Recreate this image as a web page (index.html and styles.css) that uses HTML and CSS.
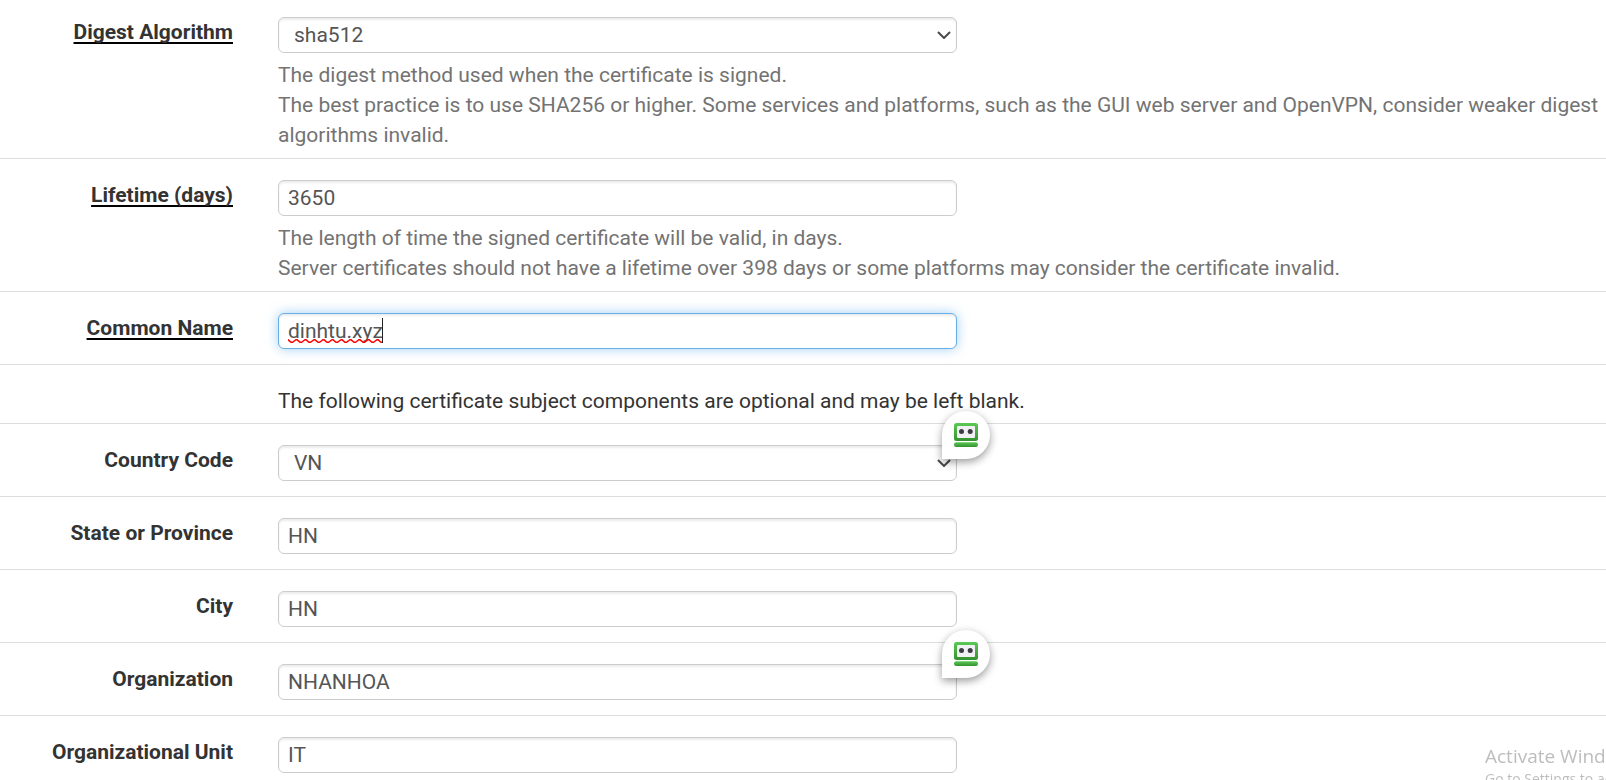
FILE: index.html
```
<!DOCTYPE html>
<html lang="en">
<head>
<meta charset="utf-8">
<title>Certificate</title>
<link rel="stylesheet" href="styles.css">
</head>
<body>
<svg class="defs" aria-hidden="true">
  <defs>
    <linearGradient id="green" x1="0" y1="0" x2="0" y2="1">
      <stop offset="0" stop-color="#5bc955"/>
      <stop offset="1" stop-color="#35922f"/>
    </linearGradient>
    <symbol id="robot" viewBox="0 0 24 24">
      <rect width="24" height="18" rx="2.5" fill="url(#green)"/>
      <rect x="3" y="3" width="18" height="12" rx="1" fill="#f1f1f3"/>
      <circle cx="7.5" cy="8.5" r="2.5" fill="#3c3c46"/>
      <circle cx="16.2" cy="8.5" r="2.5" fill="#3c3c46"/>
      <rect y="19.2" width="24" height="4.8" rx="2.2" fill="url(#green)"/>
    </symbol>
    <symbol id="chevron" viewBox="0 0 14 8">
      <path d="M1 1l6 6 6-6" fill="none" stroke="#4a4a4a" stroke-width="2"/>
    </symbol>
    <pattern id="zigzag" y="21" width="9" height="4" patternUnits="userSpaceOnUse">
      <path d="M-1.5 0L0 .7L3 3.3H4.5L8 .7L9 .7L10.5 2" fill="none" stroke="#f00" stroke-width="1.4"/>
    </pattern>
  </defs>
</svg>
<form class="form">
  <div class="row">
    <label class="label" for="digest"><span class="required">Digest Algorithm</span></label>
    <div class="control">
      <select class="field field-select" id="digest"><option>sha512</option></select>
      <svg class="chevron" aria-hidden="true"><use href="#chevron"/></svg>
    </div>
    <p class="help">The digest method used when the certificate is signed.<br>The best practice is to use SHA256 or higher. Some services and platforms, such as the GUI web server and OpenVPN, consider weaker digest algorithms invalid.</p>
  </div>
  <div class="row">
    <label class="label" for="lifetime"><span class="required">Lifetime (days)</span></label>
    <div class="control"><input class="field" id="lifetime" type="text" value="3650"></div>
    <p class="help">The length of time the signed certificate will be valid, in days.<br>Server certificates should not have a lifetime over 398 days or some platforms may consider the certificate invalid.</p>
  </div>
  <div class="row">
    <label class="label" for="cn"><span class="required">Common Name</span></label>
    <div class="control">
      <input class="field field-active" id="cn" type="text" value="dinhtu.xyz" spellcheck="false">
      <svg class="typing" aria-hidden="true"><rect y="21" width="94" height="4" fill="url(#zigzag)"/><rect x="94" width="1" height="25" fill="#222"/></svg>
    </div>
  </div>
  <div class="row row-note">
    <p class="note">The following certificate subject components are optional and may be left blank.</p>
  </div>
  <div class="row">
    <label class="label" for="country">Country Code</label>
    <div class="control">
      <select class="field field-select" id="country"><option>VN</option></select>
      <svg class="chevron" aria-hidden="true"><use href="#chevron"/></svg>
      <button class="badge" type="button" aria-label="Fill country"><svg class="badge-icon"><use href="#robot"/></svg></button>
    </div>
  </div>
  <div class="row">
    <label class="label" for="state">State or Province</label>
    <div class="control"><input class="field" id="state" type="text" value="HN"></div>
  </div>
  <div class="row">
    <label class="label" for="city">City</label>
    <div class="control"><input class="field" id="city" type="text" value="HN"></div>
  </div>
  <div class="row">
    <label class="label" for="org">Organization</label>
    <div class="control">
      <input class="field" id="org" type="text" value="NHANHOA">
      <button class="badge" type="button" aria-label="Fill organization"><svg class="badge-icon"><use href="#robot"/></svg></button>
    </div>
  </div>
  <div class="row row-last">
    <label class="label" for="unit">Organizational Unit</label>
    <div class="control"><input class="field" id="unit" type="text" value="IT"></div>
  </div>
</form>
<div class="watermark">
  <div class="watermark-title">Activate Windows</div>
  <div class="watermark-text">Go to Settings to activate Windows.</div>
</div>
</body>
</html>
```
FILE: styles.css
```
* { box-sizing: border-box; }

body {
  margin: 0;
  background: #fff;
  color: #333;
  font: 21px/30px Roboto, "Liberation Sans", sans-serif;
}

p { margin: 0; }

.defs { position: absolute; width: 0; height: 0; }

.row {
  display: grid;
  grid-template-columns: 233fr 679fr 600fr;
  column-gap: 45px;
  padding: 21px 4px 15px 0;
  border-bottom: 1px solid #ddd;
}
.row:first-child { padding-top: 17px; }
.row:has(.help) { padding-bottom: 8px; }
.row-note { padding-bottom: 7px; }
.row-last { padding-bottom: 0; border-bottom: 0; }

.label { text-align: right; font-weight: 700; }

.required {
  text-decoration: underline #000 2px;
  text-underline-offset: 3px;
  text-decoration-skip-ink: none;
}

.control { position: relative; grid-column: 2; height: 36px; }

.field {
  display: block;
  width: 100%;
  height: 36px;
  margin: 0;
  padding: 0 9px;
  border: 1px solid #ccc;
  border-radius: 6px;
  outline: 0;
  background: #fff;
  box-shadow: inset 0 2px 2px rgba(0, 0, 0, .075);
  color: #555;
  font: inherit;
}

.field-select { appearance: none; padding: 0 15px; }

.field-active {
  border-color: #66afe9;
  box-shadow: inset 0 2px 2px rgba(0, 0, 0, .075), 0 0 12px rgba(102, 175, 233, .6);
}

.chevron {
  position: absolute;
  top: 14px;
  right: 6px;
  width: 14px;
  height: 8px;
  pointer-events: none;
}

.typing {
  position: absolute;
  top: 5px;
  left: 10px;
  width: 96px;
  height: 25px;
  pointer-events: none;
}

.help { grid-column: 2 / 4; padding-top: 7px; color: #737373; }

.note { grid-column: 2 / 4; }

.badge {
  position: absolute;
  top: -34px;
  right: -33px;
  z-index: 1;
  display: flex;
  align-items: center;
  justify-content: center;
  width: 48px;
  height: 48px;
  padding: 0;
  border: 0;
  border-radius: 50% 50% 50% 0;
  background: #fff;
  box-shadow: 0 3px 8px rgba(0, 0, 0, .4);
}

.badge-icon { width: 24px; height: 24px; }

.watermark {
  position: fixed;
  right: 0;
  bottom: -9px;
  width: 121px;
  overflow: hidden;
  color: #bdbdbd;
  font-family: "Open Sans", "Noto Sans", sans-serif;
  white-space: nowrap;
}
.watermark-title { font-size: 19px; line-height: 26px; }
.watermark-text { font-size: 14px; line-height: 20px; }
```
